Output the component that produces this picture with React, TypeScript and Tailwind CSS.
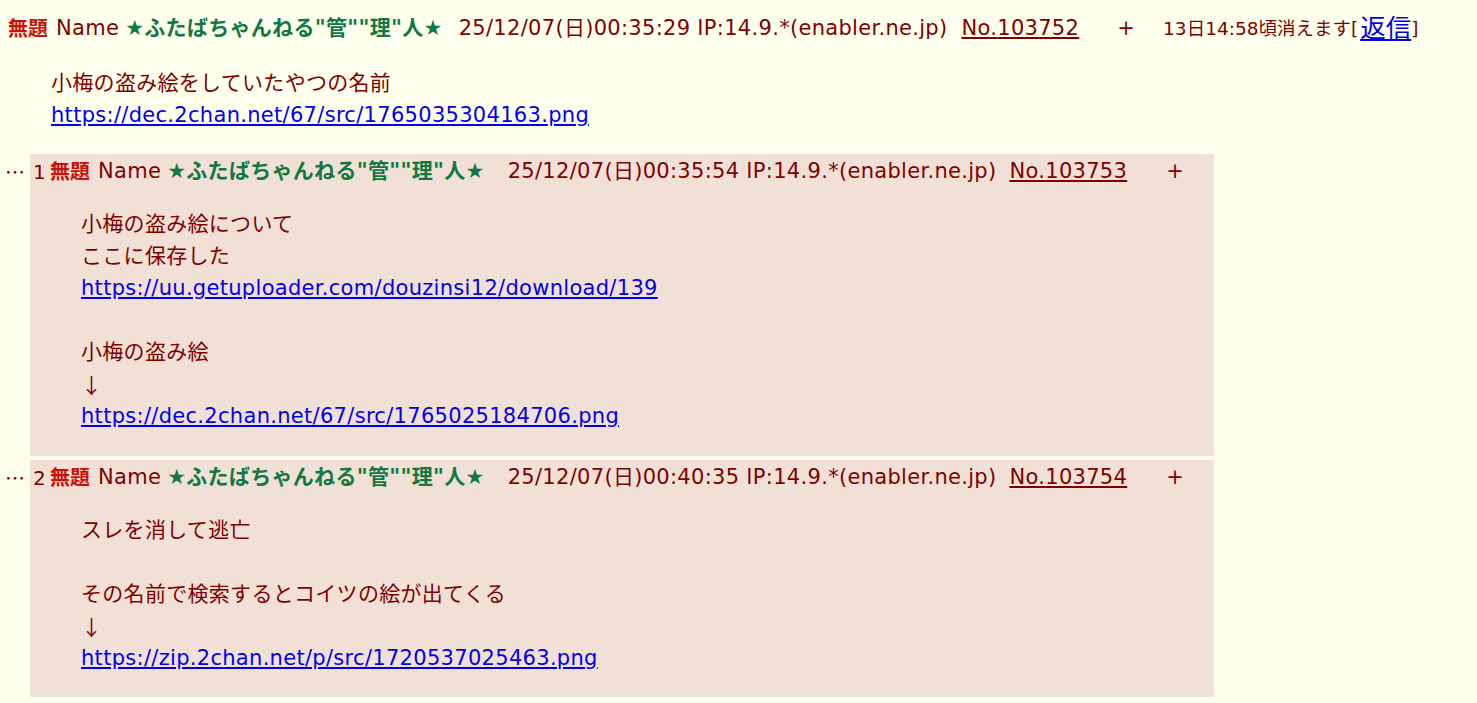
import React from "react";

const F = { fontFamily: '"DejaVu Sans", "Noto Sans CJK JP", sans-serif' };
const CJK = { fontFamily: '"Noto Sans CJK JP", sans-serif' };

function Line({ children, link }: { children?: React.ReactNode; link?: boolean }) {
  return (
    <div className="h-[32px] leading-[32px] text-[21px] tracking-[0.3px] whitespace-nowrap">
      {link ? <a className="text-[#0000EE] underline">{children}</a> : children}
    </div>
  );
}

function Arrow() {
  return (
    <div className="h-[32px] leading-[32px] text-[21px] whitespace-nowrap" style={CJK}>
      ↓
    </div>
  );
}

function HeaderCore({ date, no, dateGap, noGap, plusGap }: { date: string; no: string; dateGap: string; noGap: string; plusGap: string }) {
  return (
    <>
      <span className="text-[#CC1105] font-bold text-[20px] tracking-normal">無題</span>
      <span className="ml-[8px]">Name</span>
      <span className="ml-[6px] text-[#117743] font-bold">★ふたばちゃんねる"管""理"人★</span>
      <span className={dateGap}>{date} IP:14.9.*(enabler.ne.jp)</span>
      <a className={noGap + " underline"}>No.{no}</a>
      <span className={plusGap}>+</span>
    </>
  );
}

function Dots() {
  return (
    <div className="w-[30px] shrink-0 pl-[5px] h-[36px] flex items-center text-[20px]" style={CJK}>
      …
    </div>
  );
}

export default function App() {
  return (
    <div className="min-h-[703px] w-[1477px] bg-[#FFFFEE] text-[#800000] overflow-hidden" style={F}>
      <div className="pt-[13px] pl-[8px]">
        <div className="flex items-center h-[32px] whitespace-nowrap text-[21px] tracking-[0.3px]">
          <HeaderCore date="25/12/07(日)00:35:29" no="103752" dateGap="ml-[16px]" noGap="ml-[14px]" plusGap="ml-[38px]" />
          <span className="ml-[28px] text-[18.5px] tracking-normal">13日14:58頃消えます[</span>
          <a className="text-[25.5px] text-[#0000EE] underline leading-none tracking-normal ml-[2px]">返信</a>
          <span className="text-[18.5px]">]</span>
        </div>
      </div>
      <div className="pl-[51px] pt-[22px]">
        <Line>小梅の盗み絵をしていたやつの名前</Line>
        <Line link>https://dec.2chan.net/67/src/1765035304163.png</Line>
      </div>
      <div className="mt-[23px] flex flex-col gap-[4px]">
        <div className="flex">
          <Dots />
          <div className="w-[1184px] bg-[#F0E0D6] pb-[24px]">
            <div className="pt-[2px] pl-[3px]">
              <ReplyHeader num="1" date="25/12/07(日)00:35:54" no="103753" />
            </div>
            <div className="pl-[51px] pt-[20px]">
              <Line>小梅の盗み絵について</Line>
              <Line>ここに保存した</Line>
              <Line link>https://uu.getuploader.com/douzinsi12/download/139</Line>
              <Line />
              <Line>小梅の盗み絵</Line>
              <Arrow />
              <Line link>https://dec.2chan.net/67/src/1765025184706.png</Line>
            </div>
          </div>
        </div>
        <div className="flex">
          <Dots />
          <div className="w-[1184px] bg-[#F0E0D6] pb-[23px]">
            <div className="pt-[2px] pl-[3px]">
              <ReplyHeader num="2" date="25/12/07(日)00:40:35" no="103754" />
            </div>
            <div className="pl-[51px] pt-[20px]">
              <Line>スレを消して逃亡</Line>
              <Line />
              <Line>その名前で検索するとコイツの絵が出てくる</Line>
              <Arrow />
              <Line link>https://zip.2chan.net/p/src/1720537025463.png</Line>
            </div>
          </div>
        </div>
      </div>
    </div>
  );
}

function ReplyHeader({ num, date, no }: { num: string; date: string; no: string }) {
  return (
    <div className="flex items-center h-[32px] whitespace-nowrap text-[21px] tracking-[0.3px]">
      <span className="w-[17px] text-[20px]">{num}</span>
      <HeaderCore date={date} no={no} dateGap="ml-[23px]" noGap="ml-[13px]" plusGap="ml-[39px]" />
    </div>
  );
}
